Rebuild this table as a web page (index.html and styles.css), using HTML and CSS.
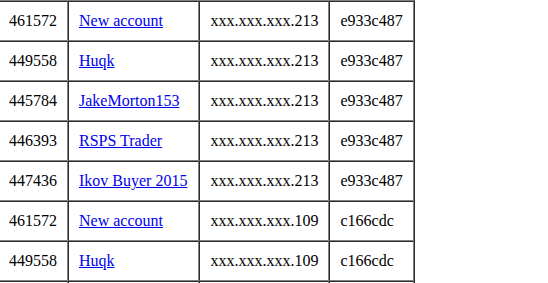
FILE: index.html
```html
<!DOCTYPE html>
<html>
<head>
<meta charset="utf-8">
<link rel="stylesheet" href="styles.css">
</head>
<body>
<table class="log">
  <tbody>
    <tr><td class="id">461572</td><td class="name"><a href="#">New account</a></td><td>xxx.xxx.xxx.213</td><td>e933c487</td></tr>
    <tr><td class="id">449558</td><td class="name"><a href="#">Huqk</a></td><td>xxx.xxx.xxx.213</td><td>e933c487</td></tr>
    <tr><td class="id">445784</td><td class="name"><a href="#">JakeMorton153</a></td><td>xxx.xxx.xxx.213</td><td>e933c487</td></tr>
    <tr><td class="id">446393</td><td class="name"><a href="#">RSPS Trader</a></td><td>xxx.xxx.xxx.213</td><td>e933c487</td></tr>
    <tr><td class="id">447436</td><td class="name"><a href="#">Ikov Buyer 2015</a></td><td>xxx.xxx.xxx.213</td><td>e933c487</td></tr>
    <tr><td class="id">461572</td><td class="name"><a href="#">New account</a></td><td>xxx.xxx.xxx.109</td><td>c166cdc</td></tr>
    <tr><td class="id">449558</td><td class="name"><a href="#">Huqk</a></td><td>xxx.xxx.xxx.109</td><td>c166cdc</td></tr>
    <tr class="more"><td class="id"></td><td class="name"></td><td></td><td></td></tr>
  </tbody>
</table>
</body>
</html>
```

FILE: styles.css
```css
html, body {
  margin: 0;
  padding: 0;
  overflow: hidden;
  background: #ffffff;
}

body {
  font-family: "Liberation Serif", "Times New Roman", serif;
  font-size: 16px;
  color: #000000;
}

.log {
  border-collapse: separate;
  border-spacing: 0;
  border: 1px outset #808080;
  margin: 0 0 0 -3px;
}

.log td {
  border: 1px inset #808080;
  padding: 10px;
  line-height: 18px;
  white-space: nowrap;
}

.log td.name {
  padding-right: 11px;
}

.log tr.more td {
  height: 18px;
}

.log a {
  color: #0000ee;
  text-decoration: underline;
}
```
